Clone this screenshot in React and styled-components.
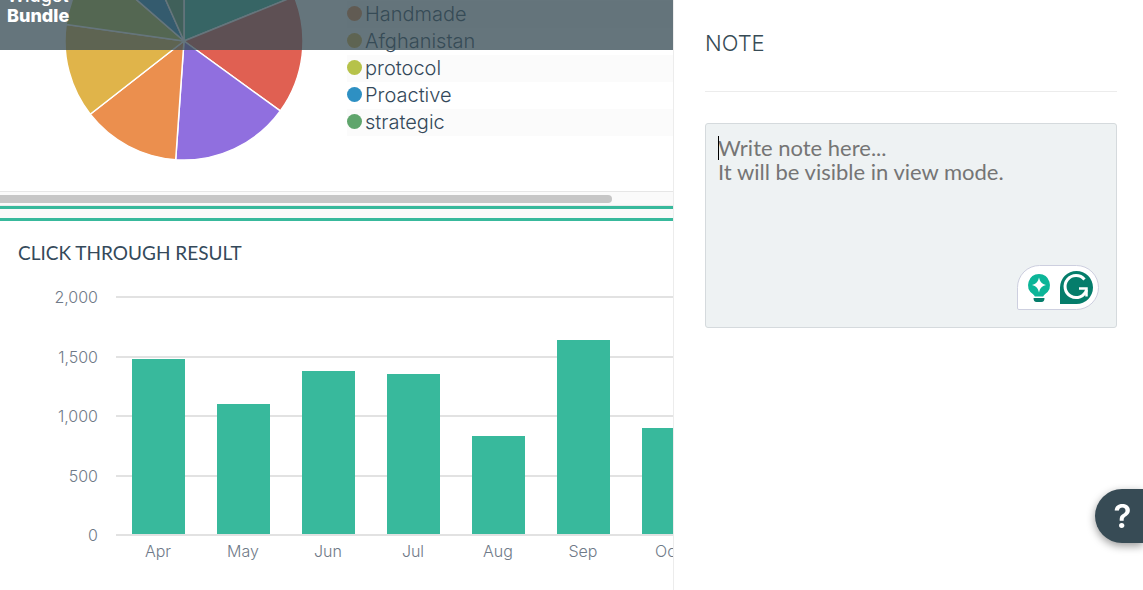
import React from 'react';
import styled, { createGlobalStyle } from 'styled-components';

const GlobalStyle = createGlobalStyle`
* {
box-sizing: border-box;
}
body {
margin: 0;
background-color: #fff;
color: #34495a;
font-family: Inter, "Liberation Sans", sans-serif;
overflow: hidden;
}
`;

const Page = styled.div`
display: flex;
height: 100vh;
overflow: hidden;
`;

const Board = styled.main`
position: relative;
flex: 1;
min-width: 0;
overflow: hidden;
background-color: #fafafa;
`;

const BoardHeader = styled.header`
position: absolute;
top: 0;
left: 0;
right: 0;
height: 50px;
display: flex;
align-items: flex-start;
overflow: hidden;
background-color: rgba(55, 75, 85, 0.77);
`;

const WidgetBundle = styled.div`
margin-top: -14px;
padding-left: 7px;
font-size: 18px;
line-height: 20px;
font-weight: 500;
color: #fff;
`;

const BundleName = styled.strong`
display: block;
font-weight: 800;
`;

const PieCard = styled.section`
background-color: #fff;
border-bottom: 3px solid #38b99c;
`;

const PieContent = styled.div`
display: flex;
align-items: flex-end;
height: 191px;
padding-left: 64px;
overflow: hidden;
`;

const PieChart = styled.svg`
flex: none;
width: 240px;
height: 240px;
margin-bottom: 30px;
`;

const Legend = styled.ul`
flex: 1;
margin: 0 0 55px 43px;
padding: 0;
list-style: none;
`;

const LegendItem = styled.li`
display: flex;
align-items: center;
gap: 3px;
height: 27px;
padding-bottom: 2px;
font-size: 20px;
font-weight: 300;
white-space: nowrap;

&:nth-child(odd) {
background-color: #fbfbfb;
}
`;

const Dot = styled.span`
width: 15px;
height: 15px;
border-radius: 50%;
background-color: ${(props) => props.$color};
`;

const ScrollTrack = styled.div`
height: 15px;
padding-top: 3px;
border-top: 1px solid #e6e6e6;
border-bottom: 1px solid #ececec;
background-color: #fafafa;
`;

const ScrollThumb = styled.div`
width: 91%;
height: 8px;
border-radius: 0 4px 4px 0;
background-color: #c6c6c6;
`;

const ChartCard = styled.section`
height: 100%;
margin-top: 9px;
padding-top: 20px;
border-top: 3px solid #38b99c;
background-color: #fff;
`;

const ChartTitle = styled.h2`
margin: 0;
padding-left: 18px;
font-family: Lato, sans-serif;
font-size: 19px;
line-height: 24px;
font-weight: 400;
`;

const BarChart = styled.svg`
display: block;
width: 740px;
height: 300px;
font-size: 16px;
font-weight: 300;
fill: #6f7a88;
`;

const NotePanel = styled.aside`
flex: 0 0 470px;
padding: 0 26px 0 31px;
border-left: 1px solid #ececec;
background-color: #fff;
`;

const NoteTitle = styled.label`
display: block;
padding: 31px 0 36px;
border-bottom: 1px solid #ececec;
font-size: 22px;
line-height: 24px;
font-weight: 300;
color: #374b55;
`;

const NoteField = styled.div`
position: relative;
margin-top: 31px;
`;

const NoteInput = styled.textarea`
display: block;
width: 100%;
height: 205px;
padding: 12px;
border: 1px solid #d5dadd;
border-radius: 3px;
outline: none;
resize: none;
background-color: #eef2f3;
color: #374b55;
font-family: Lato, sans-serif;
font-size: 22px;
line-height: 24px;

&::placeholder {
color: #757575;
opacity: 1;
}
`;

const Caret = styled.span`
position: absolute;
top: 13px;
left: 13px;
width: 1px;
height: 24px;
background-color: #000;
`;

const Assistant = styled.div`
position: absolute;
right: 18px;
bottom: 18px;
display: flex;
align-items: center;
gap: 8px;
height: 45px;
padding: 0 5px 0 8px;
border: 1px solid #cdcfdf;
border-radius: 23px 23px 23px 2px;
background-color: #fff;
`;

const AssistantButton = styled.button`
display: flex;
padding: 0;
border: none;
background: none;
`;

const HelpButton = styled.button`
position: fixed;
right: 0;
bottom: 47px;
width: 48px;
height: 54px;
padding: 0 0 0 7px;
border: none;
border-radius: 27px 0 0 27px;
background-color: #374b55;
box-shadow: 0 3px 8px rgba(0, 0, 0, 0.4);
color: #fff;
font-family: Inter, sans-serif;
font-size: 33px;
line-height: 54px;
font-weight: 600;
`;

const slices = [
    { from: -90, to: -22, color: '#38b99c' },
    { from: -22, to: 36, color: '#e06052' },
    { from: 36, to: 94, color: '#906fdf' },
    { from: 94, to: 142, color: '#eb8f4e' },
    { from: 142, to: 188, color: '#e0b44a' },
    { from: 188, to: 221, color: '#b6c24a' },
    { from: 221, to: 246, color: '#2e90c3' },
    { from: 246, to: 270, color: '#5fa56c' },
];

const legend = [
    { label: 'Handmade', color: '#eb8f4e' },
    { label: 'Afghanistan', color: '#e0b44a' },
    { label: 'protocol', color: '#b6c24a' },
    { label: 'Proactive', color: '#2e90c3' },
    { label: 'strategic', color: '#5fa56c' },
];

const months = [
    { name: 'Apr', value: 1476 },
    { name: 'May', value: 1099 },
    { name: 'Jun', value: 1375 },
    { name: 'Jul', value: 1350 },
    { name: 'Aug', value: 834 },
    { name: 'Sep', value: 1640 },
    { name: 'Oct', value: 897 },
];

const ticks = [2000, 1500, 1000, 500, 0];

const slicePath = ({ from, to }) => {
    const point = (deg) => {
        const rad = (deg * Math.PI) / 180;
        return `${120 + 119 * Math.cos(rad)} ${120 + 119 * Math.sin(rad)}`;
    };
    return `M120 120 L${point(from)} A119 119 0 0 1 ${point(to)} Z`;
};

// y of a value inside the bar chart
const scaleY = (value) => Math.round(269 - value * 0.119);

const Pie = () => (
    <PieChart viewBox="0 0 240 240" role="img" aria-label="Pie chart">
        {slices.map((slice) => (
            <path key={slice.color} d={slicePath(slice)} fill={slice.color} stroke="#fff" strokeWidth="1.5" />
        ))}
    </PieChart>
);

const Bars = () => (
    <BarChart viewBox="0 0 740 300" role="img" aria-label="Click through result">
        {ticks.map((tick) => (
            <g key={tick}>
                <rect x="116" y={scaleY(tick)} width="624" height="2" fill="#e2e2e2" />
                <text x="98" y={scaleY(tick) + 7} textAnchor="end">{tick.toLocaleString('en-US')}</text>
            </g>
        ))}
        {months.map((month, i) => (
            <g key={month.name}>
                <rect x={132 + i * 85} y={scaleY(month.value) + 1} width="53" height={268 - scaleY(month.value)} fill="#38b99c" />
                <text x={158 + i * 85} y="292" textAnchor="middle">{month.name}</text>
            </g>
        ))}
    </BarChart>
);

const BulbIcon = () => (
    <svg width="26" height="32" viewBox="0 0 26 32">
        <path d="M13 2a11 11 0 0 0-6.200 20c1 .8 1.700 1.500 2 2.500h8.400c.3-1 1-1.700 2-2.500A11 11 0 0 0 13 2z" fill="#0cb598" />
        <path d="M13 5.500c1.100 4.500 2.700 6.200 7 7.500-4.300 1.300-5.900 3-7 7.500-1.100-4.500-2.700-6.200-7-7.500 4.300-1.300 5.900-3 7-7.500z" fill="#fff" />
        <path d="M7.500 26h11c0 2.500-1 4-3 4h-5c-2 0-3-1.500-3-4z" fill="#057d6b" />
    </svg>
);

const GrammarIcon = () => (
    <svg width="33" height="33" viewBox="0 0 33 33">
        <path d="M16.500 0A16.500 16.500 0 0 1 16.500 33H0V16.500A16.500 16.500 0 0 1 16.500 0z" fill="#057d6b" />
        <path d="M24.500 8.500A11 11 0 1 0 26.500 19" fill="none" stroke="#fff" strokeWidth="3" />
        <path d="M19 17.500h7.500v8" fill="none" stroke="#fff" strokeWidth="2.500" />
    </svg>
);

const App = () => {
    return (
        <Page>
            <GlobalStyle />
            <Board>
                <PieCard>
                    <PieContent>
                        <Pie />
                        <Legend>
                            {legend.map((item) => (
                                <LegendItem key={item.label}>
                                    <Dot $color={item.color} />
                                    {item.label}
                                </LegendItem>
                            ))}
                        </Legend>
                    </PieContent>
                    <ScrollTrack>
                        <ScrollThumb />
                    </ScrollTrack>
                </PieCard>
                <ChartCard>
                    <ChartTitle>CLICK THROUGH RESULT</ChartTitle>
                    <Bars />
                </ChartCard>
                <BoardHeader>
                    <WidgetBundle>
                        Widget
                        <BundleName>Bundle</BundleName>
                    </WidgetBundle>
                </BoardHeader>
            </Board>
            <NotePanel>
                <NoteTitle htmlFor="note">NOTE</NoteTitle>
                <NoteField>
                    <NoteInput id="note" placeholder={'Write note here...\nIt will be visible in view mode.'} />
                    <Caret />
                    <Assistant>
                        <AssistantButton type="button" aria-label="Suggestions"><BulbIcon /></AssistantButton>
                        <AssistantButton type="button" aria-label="Check grammar"><GrammarIcon /></AssistantButton>
                    </Assistant>
                </NoteField>
            </NotePanel>
            <HelpButton type="button" aria-label="Help">?</HelpButton>
        </Page>
    );
};

export default App;
